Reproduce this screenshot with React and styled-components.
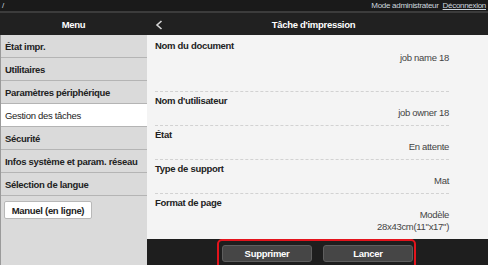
import styled, { createGlobalStyle } from "styled-components";

const GlobalStyle = createGlobalStyle`
  body {
    margin: 0;
    background: #fff;
    font-family: "Liberation Sans", Arial, sans-serif;
    letter-spacing: -0.3px;
  }
`;

const Page = styled.div`
  width: 488px;
  display: flex;
  flex-direction: column;
  white-space: nowrap;
`;

const TopBar = styled.div`
  height: 11px;
  background: #1a1a1a;
  border-bottom: 2px solid #3c3c3c;
  display: flex;
  align-items: center;
  justify-content: space-between;
  padding: 0 2px;
  font-size: 8px;
  color: #cdd6df;
`;

const TopLinks = styled.div`
  display: flex;
  gap: 4px;
`;

const Logout = styled.span`
  text-decoration: underline;
`;

const Header = styled.div`
  height: 22px;
  background: #212121;
  display: grid;
  grid-template-columns: 147px 1fr;
  color: #fff;
  font-size: 9.5px;
  font-weight: bold;
`;

const MenuTitle = styled.div`
  display: flex;
  align-items: center;
  justify-content: center;
`;

const HeaderMain = styled.div`
  position: relative;
  display: flex;
  align-items: center;
  justify-content: center;
  padding-right: 8px;
`;

const Back = styled.svg`
  position: absolute;
  left: 8px;
  top: 7px;
`;

const Body = styled.div`
  height: 230px;
  display: grid;
  grid-template-columns: 147px 1fr;
`;

const Sidebar = styled.div`
  background: #dadada;
  border-left: 1px solid #9a9a9a;
  display: flex;
  flex-direction: column;
`;

const MenuItem = styled.div`
  height: 22px;
  border-bottom: 1px solid #b4b4b4;
  background: ${(p) => (p.$active ? "#fff" : "transparent")};
  display: flex;
  align-items: center;
  padding-left: 4px;
  font-size: 9.5px;
  font-weight: ${(p) => (p.$active ? "normal" : "bold")};
  color: #222;
`;

const ManualButton = styled.button`
  margin: 5px 0 0 3px;
  width: 88px;
  height: 18px;
  background: #fff;
  border: 1px solid #b8b8b8;
  border-radius: 2px;
  font-family: inherit;
  letter-spacing: inherit;
  font-size: 9.5px;
  font-weight: bold;
  color: #222;
  padding: 0;
`;

const Main = styled.div`
  display: flex;
  flex-direction: column;
`;

const Details = styled.div`
  flex: 1;
  background: #f4f4f4;
  display: flex;
  flex-direction: column;
`;

const Row = styled.div`
  margin: 0 39px 0 8px;
  padding: ${(p) => (p.$first ? "5px 0 27px" : "3px 0 6px")};
  border-bottom: ${(p) => (p.$last ? "none" : "1px dashed #d2d2d2")};
  line-height: 12px;
  font-size: 9.5px;
`;

const Label = styled.div`
  font-weight: bold;
  color: #222;
`;

const Value = styled.div`
  text-align: right;
  color: #444;
`;

const Footer = styled.div`
  height: 27px;
  background: #1e1e1e;
  display: flex;
  align-items: center;
  justify-content: center;
`;

const ButtonGroup = styled.div`
  position: relative;
  display: flex;
  gap: 11px;
  margin-top: 1px;

  &::after {
    content: "";
    position: absolute;
    top: -6px;
    bottom: -9px;
    left: -5px;
    right: -3px;
    border: 2px solid #e3141c;
    border-radius: 5px;
    pointer-events: none;
  }
`;

const ActionButton = styled.button`
  width: 90px;
  height: 17px;
  background: #464646;
  border: 1px solid #5e5e5e;
  border-radius: 3px;
  color: #fff;
  font-family: inherit;
  letter-spacing: inherit;
  font-size: 9.5px;
  font-weight: bold;
  padding: 0;
`;

const menu = [
  "État impr.",
  "Utilitaires",
  "Paramètres périphérique",
  "Gestion des tâches",
  "Sécurité",
  "Infos système et param. réseau",
  "Sélection de langue",
];

const rows = [
  { label: "Nom du document", value: ["job name 18"] },
  { label: "Nom d'utilisateur", value: ["job owner 18"] },
  { label: "État", value: ["En attente"] },
  { label: "Type de support", value: ["Mat"] },
  { label: "Format de page", value: ["Modèle", "28x43cm(11\"x17\")"] },
];

export default function App() {
  return (
    <>
      <GlobalStyle />
      <Page>
        <TopBar>
          <span>/</span>
          <TopLinks>
            <span>Mode administrateur</span>
            <Logout>Déconnexion</Logout>
          </TopLinks>
        </TopBar>
        <Header>
          <MenuTitle>Menu</MenuTitle>
          <HeaderMain>
            <Back width="8" height="10" viewBox="0 0 8 10">
              <path d="M6.5 1 L2 5 L6.5 9" fill="none" stroke="#d8d8d8" strokeWidth="1.6" />
            </Back>
            Tâche d'impression
          </HeaderMain>
        </Header>
        <Body>
          <Sidebar>
            {menu.map((m) => (
              <MenuItem key={m} $active={m === "Gestion des tâches"}>{m}</MenuItem>
            ))}
            <div>
              <ManualButton>Manuel (en ligne)</ManualButton>
            </div>
          </Sidebar>
          <Main>
            <Details>
              {rows.map((r, i) => (
                <Row key={r.label} $first={i === 0} $last={i === rows.length - 1}>
                  <Label>{r.label}</Label>
                  {r.value.map((v) => (
                    <Value key={v}>{v}</Value>
                  ))}
                </Row>
              ))}
            </Details>
            <Footer>
              <ButtonGroup>
                <ActionButton>Supprimer</ActionButton>
                <ActionButton>Lancer</ActionButton>
              </ButtonGroup>
            </Footer>
          </Main>
        </Body>
      </Page>
    </>
  );
}
